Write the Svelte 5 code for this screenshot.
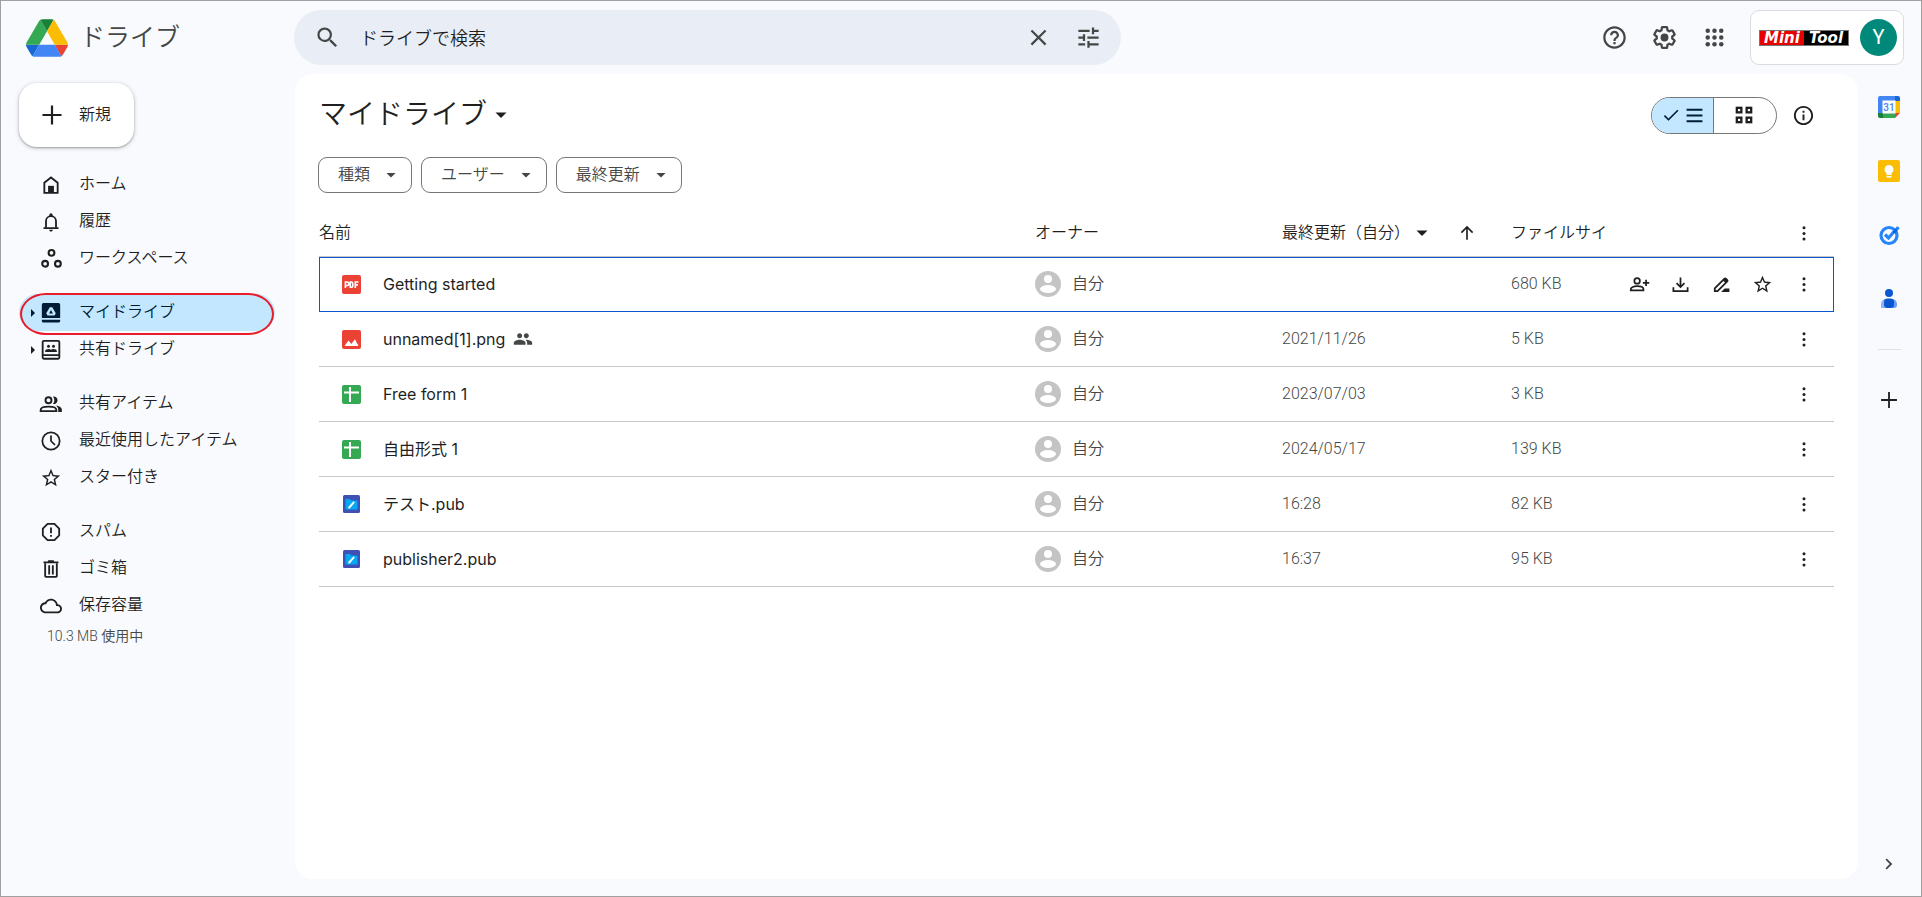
<script lang="ts">
  interface NavItem {
    icon: string;
    label: string;
    size?: number;
    active?: boolean;
    expandable?: boolean;
  }

  interface DriveFile {
    name: string;
    type: "pdf" | "image" | "sheet" | "pub";
    modified: string;
    size: string;
    shared?: boolean;
  }

  const navGroups: NavItem[][] = [
    [
      { icon: "home", label: "ホーム" },
      { icon: "bell", label: "履歴" },
      { icon: "workspaces", label: "ワークスペース", size: 21 },
    ],
    [
      { icon: "drive", label: "マイドライブ", active: true, expandable: true },
      { icon: "sharedDrive", label: "共有ドライブ", expandable: true },
    ],
    [
      { icon: "people", label: "共有アイテム" },
      { icon: "clock", label: "最近使用したアイテム" },
      { icon: "star", label: "スター付き", size: 22 },
    ],
    [
      { icon: "spam", label: "スパム" },
      { icon: "trash", label: "ゴミ箱" },
      { icon: "cloud", label: "保存容量", size: 22 },
    ],
  ];

  const files: DriveFile[] = [
    { name: "Getting started", type: "pdf", modified: "", size: "680 KB" },
    { name: "unnamed[1].png", type: "image", modified: "2021/11/26", size: "5 KB", shared: true },
    { name: "Free form 1", type: "sheet", modified: "2023/07/03", size: "3 KB" },
    { name: "自由形式 1", type: "sheet", modified: "2024/05/17", size: "139 KB" },
    { name: "テスト.pub", type: "pub", modified: "16:28", size: "82 KB" },
    { name: "publisher2.pub", type: "pub", modified: "16:37", size: "95 KB" },
  ];

  const chips = ["種類", "ユーザー", "最終更新"];

  const rowActions = [
    { icon: "personAdd", label: "共有" },
    { icon: "download", label: "ダウンロード" },
    { icon: "rename", label: "名前を変更" },
    { icon: "star", label: "スターを付ける" },
  ];

  let query = $state("");
  let selected = $state(0);
  let view = $state<"list" | "grid">("list");
</script>

{#snippet icon(name: string, size = 23)}
  <svg class="icon" width={size} height={size} viewBox="0 0 24 24" fill="currentColor" aria-hidden="true">
    {#if name === "search"}
      <path d="M15.5 14h-.79l-.28-.27A6.471 6.471 0 0 0 16 9.5 6.5 6.5 0 1 0 9.5 16c1.61 0 3.09-.59 4.23-1.57l.27.28v.79l5 4.99L20.49 19l-4.99-5zm-6 0C7.01 14 5 11.99 5 9.5S7.01 5 9.5 5 14 7.01 14 9.5 11.99 14 9.5 14z" />
    {:else if name === "close"}
      <path d="M19 6.41L17.59 5 12 10.59 6.41 5 5 6.41 10.59 12 5 17.59 6.41 19 12 13.41 17.59 19 19 17.59 13.41 12z" />
    {:else if name === "tune"}
      <path d="M3 17v2h6v-2H3zM3 5v2h10V5H3zm10 16v-2h8v-2h-8v-2h-2v6h2zM7 9v2H3v2h4v2h2V9H7zm14 4v-2H11v2h10zm-6-4h2V7h4V5h-4V3h-2v6z" />
    {:else if name === "help"}
      <path d="M11 18h2v-2h-2v2zm1-16C6.48 2 2 6.48 2 12s4.48 10 10 10 10-4.48 10-10S17.52 2 12 2zm0 18c-4.41 0-8-3.59-8-8s3.59-8 8-8 8 3.59 8 8-3.59 8-8 8zm0-14c-2.21 0-4 1.79-4 4h2c0-1.1.9-2 2-2s2 .9 2 2c0 2-3 1.75-3 5h2c0-2.25 3-2.5 3-5 0-2.21-1.79-4-4-4z" />
    {:else if name === "settings"}
      <path d="M13.85 22.25h-3.7c-.74 0-1.36-.54-1.45-1.27l-.27-1.89c-.27-.14-.53-.29-.79-.46l-1.8.72c-.7.26-1.47-.03-1.81-.65L2.2 15.53c-.35-.66-.2-1.44.36-1.88l1.53-1.19c-.01-.15-.02-.3-.02-.46 0-.15.01-.31.02-.46l-1.52-1.19c-.59-.45-.74-1.26-.37-1.88l1.85-3.19c.34-.62 1.11-.9 1.79-.63l1.81.73c.26-.17.52-.32.78-.46l.27-1.91c.09-.7.71-1.25 1.44-1.25h3.7c.74 0 1.36.54 1.45 1.27l.27 1.89c.27.14.53.29.79.46l1.8-.72c.71-.26 1.48.03 1.82.65l1.84 3.18c.36.66.2 1.44-.36 1.88l-1.52 1.19c.01.15.02.3.02.46s-.01.31-.02.46l1.52 1.19c.56.45.72 1.23.37 1.86l-1.86 3.22c-.34.62-1.11.9-1.8.63l-1.8-.72c-.26.17-.52.32-.78.46l-.27 1.91c-.1.68-.72 1.22-1.46 1.22zm-3.23-2h2.76l.37-2.55.53-.22c.44-.18.88-.44 1.34-.78l.45-.34 2.38.96 1.38-2.4-2.03-1.58.07-.56c.03-.26.06-.51.06-.78s-.03-.53-.06-.78l-.07-.56 2.03-1.58-1.39-2.4-2.39.96-.45-.35c-.42-.32-.87-.58-1.33-.77l-.52-.22-.37-2.55h-2.76l-.37 2.55-.53.21c-.44.19-.88.44-1.34.79l-.45.33-2.38-.95-1.39 2.39 2.03 1.58-.07.56a7 7 0 0 0-.06.79c0 .26.02.53.06.78l.07.56-2.03 1.58 1.38 2.4 2.39-.96.45.35c.43.33.86.58 1.33.77l.53.22.38 2.55z" />
      <circle cx="12" cy="12" r="3.5" />
    {:else if name === "apps"}
      {#each [6, 12, 18] as y}
        {#each [6, 12, 18] as x}
          <circle cx={x} cy={y} r="2" />
        {/each}
      {/each}
    {:else if name === "plus"}
      <path d="M13.1 2.5v8.4h8.4v2.2h-8.4v8.4h-2.2v-8.4H2.5v-2.2h8.4V2.5z" />
    {:else if name === "home"}
      <path d="M4 21.5V9.2L12 3l8 6.2V21.5Z" fill="none" stroke="currentColor" stroke-width="2.2" />
      <rect x="8.5" y="13" width="7" height="8.5" />
    {:else if name === "bell"}
      <path d="M6 19v-8a6 6 0 0 1 12 0v8" fill="none" stroke="currentColor" stroke-width="2.2" />
      <path d="M3 18.2h18v2.2H3zM10 3.5a2 2 0 0 1 4 0v2h-4zM9.8 21.4h4.4a2.2 2.2 0 0 1-4.4 0z" />
    {:else if name === "workspaces"}
      <g fill="none" stroke="currentColor" stroke-width="2.4">
        <circle cx="12" cy="5.5" r="3.3" />
        <circle cx="4.7" cy="18" r="3.3" />
        <circle cx="19.3" cy="18" r="3.3" />
      </g>
    {:else if name === "drive"}
      <path fill-rule="evenodd" d="M3 0h18a2 2 0 0 1 2 2v16H1V2a2 2 0 0 1 2-2zm7.5 5L6.3 12.2 7.8 15h8.4l1.5-2.8L13.5 5zm1.5 3.5 2.3 4h-4.6z" />
      <path d="M1 20h22v1.5a2 2 0 0 1-2 2H3a2 2 0 0 1-2-2z" />
    {:else if name === "sharedDrive"}
      <path d="M2 2.5a1.5 1.5 0 0 1 1.5-1.5h17A1.5 1.5 0 0 1 22 2.5v18.5a1.5 1.5 0 0 1-1.5 1.5h-17A1.5 1.5 0 0 1 2 21zM2 18.2h20" fill="none" stroke="currentColor" stroke-width="2.2" />
      <circle cx="9" cy="7.5" r="1.8" />
      <circle cx="15" cy="7.5" r="1.8" />
      <path d="M5 14.5v-1.2c0-1.5 2-2.5 4-2.5 1.2 0 2.3.3 3 .9.7-.6 1.8-.9 3-.9 2 0 4 1 4 2.5v1.2z" />
    {:else if name === "people"}
      <g fill="none" stroke="currentColor" stroke-width="2.3">
        <circle cx="9" cy="7.5" r="3.6" />
        <path d="M-.4 20.5v-1.4c0-2.6 4.5-4 9.4-4s9.4 1.4 9.4 4v1.4z" />
      </g>
      <path d="M14.3 12a6.7 6.7 0 0 0 0-9 4.6 4.6 0 1 1 0 9zM18 13.8c3.5.5 7 2.2 7 4.8v3h-4.3v-2.8c0-1.9-1-3.7-2.7-5z" />
    {:else if name === "peopleFill"}
      <path d="M16 11c1.66 0 2.99-1.34 2.99-3S17.66 5 16 5s-3 1.34-3 3 1.34 3 3 3zm-8 0c1.66 0 2.99-1.34 2.99-3S9.66 5 8 5 5 6.34 5 8s1.34 3 3 3zm0 2c-2.33 0-7 1.17-7 3.5V19h14v-2.5c0-2.33-4.67-3.5-7-3.5zm8 0c-.29 0-.62.02-.97.05 1.16.84 1.97 1.97 1.97 3.45V19h6v-2.5c0-2.33-4.67-3.5-7-3.5z" />
    {:else if name === "clock"}
      <g fill="none" stroke="currentColor" stroke-width="2.1">
        <circle cx="12" cy="12" r="10.4" />
        <path d="M12 5.5V12l4.8 4.8" />
      </g>
    {:else if name === "star"}
      <path d="M22 9.24l-7.19-.62L12 2 9.19 8.63 2 9.24l5.46 4.73L5.82 21 12 17.27 18.18 21l-1.63-7.03L22 9.24zM12 15.4l-3.76 2.27 1-4.28-3.32-2.88 4.38-.38L12 6.1l1.71 4.04 4.38.38-3.32 2.88 1 4.28L12 15.4z" />
    {:else if name === "spam"}
      <path d="M7.9 2.2h8.2l5.7 5.7v8.2l-5.7 5.7H7.9l-5.7-5.7V7.9z" fill="none" stroke="currentColor" stroke-width="2.2" stroke-linejoin="round" />
      <path d="M10.9 6.5h2.2v7h-2.2zM10.9 15.5h2.2v2.2h-2.2z" />
    {:else if name === "trash"}
      <path d="M5 5v15.5a1 1 0 0 0 1 1h12a1 1 0 0 0 1-1V5" fill="none" stroke="currentColor" stroke-width="2.2" />
      <path d="M8.5 1.5h7V3H21v2.2H3V3h5.5zM8.7 7.5h2.2v11H8.7zM13.1 7.5h2.2v11h-2.2z" />
    {:else if name === "cloud"}
      <path d="M19.35 10.04C18.67 6.59 15.64 4 12 4 9.11 4 6.6 5.64 5.35 8.04 2.34 8.36 0 10.91 0 14c0 3.31 2.69 6 6 6h13c2.76 0 5-2.24 5-5 0-2.64-2.05-4.78-4.65-4.96zM19 18H6c-2.21 0-4-1.79-4-4s1.79-4 4-4h.71C7.37 7.69 9.48 6 12 6c3.04 0 5.5 2.46 5.5 5.5v.5H19c1.66 0 3 1.34 3 3s-1.34 3-3 3z" />
    {:else if name === "caret"}
      <path d="M6.5 9.5l5.5 5.5 5.5-5.5z" />
    {:else if name === "check"}
      <path d="M9 16.2L4.8 12l-1.4 1.4L9 19 21 7l-1.4-1.4z" />
    {:else if name === "list"}
      <path d="M2 3.5h20V6H2zM2 10.8h20v2.5H2zM2 18h20v2.5H2z" />
    {:else if name === "grid"}
      <g fill="none" stroke="currentColor" stroke-width="2.8">
        <rect x="3.4" y="3.4" width="5.4" height="5.4" />
        <rect x="15.2" y="3.4" width="5.4" height="5.4" />
        <rect x="3.4" y="15.2" width="5.4" height="5.4" />
        <rect x="15.2" y="15.2" width="5.4" height="5.4" />
      </g>
    {:else if name === "info"}
      <path d="M11 7h2v2.2h-2zm0 4h2v6h-2zm1-9C6.48 2 2 6.48 2 12s4.48 10 10 10 10-4.48 10-10S17.52 2 12 2zm0 18c-4.41 0-8-3.59-8-8s3.59-8 8-8 8 3.59 8 8-3.59 8-8 8z" />
    {:else if name === "arrowUp"}
      <path d="M12 21V4M4.5 11.5L12 4l7.5 7.5" fill="none" stroke="currentColor" stroke-width="2.2" />
    {:else if name === "kebab"}
      <circle cx="12" cy="5" r="2" />
      <circle cx="12" cy="12.5" r="2" />
      <circle cx="12" cy="20" r="2" />
    {:else if name === "personAdd"}
      <g fill="none" stroke="currentColor" stroke-width="2.2">
        <circle cx="9" cy="7.5" r="3.5" />
        <path d="M1 19.5V18c0-2.4 3.8-3.8 8-3.8s8 1.4 8 3.8v1.5zM20.3 6v8M16.3 10h8" />
      </g>
    {:else if name === "download"}
      <path d="M12 3v12M7 10.2l5 5 5-5M3 15.5v5h18v-5" fill="none" stroke="currentColor" stroke-width="2.2" />
    {:else if name === "rename"}
      <path d="M3.5 20.5V17L15.8 4.7a1.2 1.2 0 0 1 1.7 0l1.8 1.8a1.2 1.2 0 0 1 0 1.7L7 20.5z" fill="none" stroke="currentColor" stroke-width="2.2" />
      <path d="M13.5 6.5l4 4 2.5-2.7-3.5-4zM16 17h6v4.5H11.5z" />
    {:else if name === "chevron"}
      <path d="M9.6 6L8.2 7.4l4.6 4.6-4.6 4.6L9.6 18l6-6z" />
    {/if}
  </svg>
{/snippet}

{#snippet fileIcon(type: DriveFile["type"])}
  <svg class="icon" width="19" height="19" viewBox="0 0 19 19" aria-hidden="true">
    {#if type === "pdf"}
      <rect width="19" height="19" rx="2" fill="#ea4335" />
      <g fill="none" stroke="#fff" stroke-width="1.6">
        <path d="M3.4 13V7h1.7a1.6 1.6 0 0 1 0 3.5H3.4M8.3 7v5.3h1a1.5 1.5 0 0 0 1.5-1.5V8.5A1.5 1.5 0 0 0 9.3 7zM13.3 13V7h3.2M13.3 9.9h2.7" />
      </g>
    {:else if type === "image"}
      <rect width="19" height="19" rx="2" fill="#ea4335" />
      <path d="M2.5 16l4-5.5 2.8 3.6 3.7-4.8 3.5 6.7z" fill="#fff" />
    {:else if type === "sheet"}
      <rect width="19" height="19" rx="2" fill="#34a853" />
      <path d="M2 6.5h5V2h2v4.5h8v2H9V17H7V8.5H2z" fill="#fff" />
    {:else}
      <rect x="1" width="17" height="18" rx="1.5" fill="#3f51b5" />
      <path d="M3.5 4h4.3l1.5 1.5h6.2v9h-12z" fill="#03a9f4" />
      <path d="M11.5 6.3l1.3 1.2-5 6H6.3v-1.4z" fill="#fff" />
    {/if}
  </svg>
{/snippet}

<div class="app">
  <header class="topbar">
    <a class="brand" href="#home">
      <svg width="42" height="38" viewBox="0 0 87.3 78" aria-hidden="true">
        <path fill="#1967d2" d="m6.6 66.85 3.85 6.65c.8 1.4 1.95 2.5 3.3 3.3l13.75-23.8h-27.5c0 1.55.4 3.1 1.2 4.5z" />
        <path fill="#34a853" d="m43.65 25-13.75-23.8c-1.35.8-2.5 1.9-3.3 3.3l-25.4 44a9.06 9.06 0 0 0 -1.2 4.5h27.5z" />
        <path fill="#ea4335" d="m73.55 76.8c1.35-.8 2.5-1.9 3.3-3.3l1.6-2.75 7.65-13.25c.8-1.4 1.2-2.95 1.2-4.5h-27.5l5.85 11.5z" />
        <path fill="#188038" d="m43.65 25 13.75-23.8c-1.35-.8-2.9-1.2-4.5-1.2h-18.5c-1.6 0-3.15.45-4.5 1.2z" />
        <path fill="#4285f4" d="m59.8 53h-32.3l-13.75 23.8c1.35.8 2.9 1.2 4.5 1.2h50.8c1.6 0 3.15-.45 4.5-1.2z" />
        <path fill="#fbbc04" d="m73.4 26.5-12.7-22c-.8-1.4-1.95-2.5-3.3-3.3l-13.75 23.8 16.15 28h27.45c0-1.55-.4-3.1-1.2-4.5z" />
      </svg>
      <span>ドライブ</span>
    </a>

    <form class="search" role="search" onsubmit={(e) => e.preventDefault()}>
      <button type="submit" aria-label="検索">{@render icon("search", 27)}</button>
      <input type="text" aria-label="ドライブで検索" placeholder="ドライブで検索" bind:value={query} />
      <button type="button" aria-label="検索をクリア" onclick={() => (query = "")}>{@render icon("close", 27)}</button>
      <button type="button" aria-label="検索オプション">{@render icon("tune", 27)}</button>
    </form>

    <div class="top-actions">
      <button aria-label="ヘルプ">{@render icon("help", 27)}</button>
      <button aria-label="設定">{@render icon("settings", 27)}</button>
      <button aria-label="アプリ">{@render icon("apps", 27)}</button>
      <button class="account" aria-label="アカウント">
        <span class="org"><span class="org-red">Mini</span><span class="org-black">Tool</span></span>
        <span class="avatar">Y</span>
      </button>
    </div>
  </header>

  <aside class="sidebar">
    <button class="new-btn">{@render icon("plus", 24)}<span>新規</span></button>
    <nav>
      {#each navGroups as group}
        <ul>
          {#each group as item}
            <li>
              <a href="#{item.icon}" class:active={item.active} aria-current={item.active ? "page" : undefined}>
                <span class="expander">
                  {#if item.expandable}
                    <svg width="4" height="8" viewBox="0 0 4 8" aria-hidden="true"><path d="M0 0l4 4-4 4z" fill="currentColor" /></svg>
                  {/if}
                </span>
                <span class="nav-icon">{@render icon(item.icon, item.size ?? 20)}</span>
                <span class="nav-label">{item.label}</span>
              </a>
            </li>
          {/each}
        </ul>
      {/each}
    </nav>
    <p class="storage">10.3 MB 使用中</p>
  </aside>

  <main class="panel">
    <div class="title-row">
      <h1><button>マイドライブ{@render icon("caret", 24)}</button></h1>
      <div class="view-toggle">
        <button class:on={view === "list"} aria-label="リスト" aria-pressed={view === "list"} onclick={() => (view = "list")}>
          {#if view === "list"}{@render icon("check", 20)}{/if}
          {@render icon("list", 19)}
        </button>
        <button class:on={view === "grid"} aria-label="グリッド" aria-pressed={view === "grid"} onclick={() => (view = "grid")}>
          {@render icon("grid", 20)}
        </button>
      </div>
      <button class="info" aria-label="詳細を表示">{@render icon("info")}</button>
    </div>

    <div class="chips">
      {#each chips as chip}
        <button>{chip}{@render icon("caret", 20)}</button>
      {/each}
    </div>

    <table>
      <colgroup>
        <col />
        <col class="col-owner" />
        <col class="col-date" />
        <col class="col-size" />
        <col class="col-actions" />
      </colgroup>
      <thead>
        <tr>
          <th>名前</th>
          <th>オーナー</th>
          <th>
            <div class="sort">
              <button>最終更新（自分）{@render icon("caret", 24)}</button>
              <button aria-label="並べ替えの方向を逆にする">{@render icon("arrowUp", 18)}</button>
            </div>
          </th>
          <th>ファイルサイ</th>
          <th>
            <div class="actions"><button aria-label="その他">{@render icon("kebab", 18)}</button></div>
          </th>
        </tr>
      </thead>
      <tbody>
        {#each files as file, i}
          <tr class:selected={selected === i} onclick={() => (selected = i)}>
            <td>
              <div class="name">
                {@render fileIcon(file.type)}
                <span>{file.name}</span>
                {#if file.shared}{@render icon("peopleFill", 20)}{/if}
              </div>
            </td>
            <td>
              <div class="owner">
                <svg class="icon" width="26" height="26" viewBox="0 0 26 26" aria-hidden="true">
                  <circle cx="13" cy="13" r="13" fill="#c4c4c4" />
                  <circle cx="13" cy="8" r="4" fill="#fff" />
                  <ellipse cx="13" cy="18" rx="8" ry="4" fill="#fff" />
                </svg>
                <span>自分</span>
              </div>
            </td>
            <td>{file.modified}</td>
            <td>{file.size}</td>
            <td>
              <div class="actions">
                {#if selected === i}
                  {#each rowActions as action}
                    <button aria-label={action.label}>{@render icon(action.icon, action.icon === "star" ? 21 : 19)}</button>
                  {/each}
                {/if}
                <button aria-label="その他の操作">{@render icon("kebab", 18)}</button>
              </div>
            </td>
          </tr>
        {/each}
      </tbody>
    </table>
  </main>

  <aside class="rail">
    <button aria-label="カレンダー">
      <svg width="22" height="22" viewBox="0 0 22 22" aria-hidden="true">
        <path d="M2 0h15v5H5v12H0V2a2 2 0 0 1 2-2z" fill="#4285f4" />
        <path d="M17 0h3a2 2 0 0 1 2 2v3h-5z" fill="#1967d2" />
        <path d="M17 5h5v12h-5z" fill="#fbbc04" />
        <path d="M0 17h5v5H2a2 2 0 0 1-2-2z" fill="#188038" />
        <path d="M5 17h12v5H5z" fill="#34a853" />
        <path d="M17 17h5l-5 5z" fill="#ea4335" />
        <path d="M4.5 4.5h13v13h-13z" fill="#fff" />
        <text class="cal-day" x="11" y="15" text-anchor="middle">31</text>
      </svg>
    </button>
    <button aria-label="Keep">
      <svg width="22" height="22" viewBox="0 0 22 22" aria-hidden="true">
        <rect width="22" height="22" rx="2" fill="#fbbc04" />
        <path d="M11 5a4.5 4.5 0 0 0-2.5 8.2V15h5v-1.8A4.5 4.5 0 0 0 11 5zM8.5 16h5v1.6h-5z" fill="#fff" />
      </svg>
    </button>
    <button aria-label="ToDo リスト">
      <svg width="22" height="22" viewBox="0 0 22 22" aria-hidden="true">
        <circle cx="11" cy="11.5" r="8" fill="none" stroke="#2684fc" stroke-width="3.2" />
        <path d="M7 10.5l3.5 3.5 7-8" fill="none" stroke="#2684fc" stroke-width="3.2" />
        <path d="M14.5 8l3.5-4 2 2-3.2 3.6z" fill="#0066da" />
        <circle cx="19.5" cy="4.2" r="1.8" fill="#2684fc" />
      </svg>
    </button>
    <button aria-label="連絡先">
      <svg width="22" height="22" viewBox="0 0 22 22" aria-hidden="true">
        <circle cx="11" cy="5" r="4" fill="#0b57d0" />
        <path d="M3 20v-4a5 5 0 0 1 5-5h6v9z" fill="#8ab4f8" />
        <path d="M8 11h6a5 5 0 0 1 5 5v1a3 3 0 0 1-3 3H8z" fill="#6a9cff" />
        <rect x="6" y="10.5" width="10" height="9.5" rx="3.5" fill="#0b57d0" />
      </svg>
    </button>
    <hr />
    <button aria-label="アドオンを取得">{@render icon("plus", 20)}</button>
    <button class="collapse" aria-label="サイドパネルを非表示">{@render icon("chevron", 22)}</button>
  </aside>
</div>

<style>
  :global(body) {
    background: #f8fafd;
  }

  .app,
  .app * {
    box-sizing: border-box;
  }

  .app {
    display: grid;
    grid-template-columns: 294px minmax(0, 1fr) 63px;
    grid-template-rows: 73px 1fr;
    min-height: 100vh;
    background: #f8fafd;
    border: 1px solid #a0a0a0;
    color: #1f1f1f;
    font-family: Roboto, "Noto Sans CJK JP", sans-serif;
    font-size: 16px;
    font-weight: 350;
    line-height: 24px;
  }

  button {
    display: flex;
    align-items: center;
    justify-content: center;
    padding: 0;
    border: none;
    background: none;
    color: inherit;
    font: inherit;
    cursor: pointer;
  }

  a {
    color: inherit;
    text-decoration: none;
  }

  .icon {
    flex-shrink: 0;
    overflow: visible;
  }

  /* Top bar */
  .topbar {
    grid-column: 1 / -1;
    display: flex;
    align-items: center;
    padding-right: 17px;
  }

  .brand {
    display: flex;
    align-items: center;
    gap: 12px;
    flex: 0 0 293px;
    padding-left: 25px;
    color: #444746;
    font-size: 25px;
    line-height: 38px;
  }

  .search {
    display: flex;
    align-items: center;
    flex: 0 1 827px;
    height: 55px;
    padding: 0 10px;
    border-radius: 28px;
    background: #e9eef6;
    color: #444746;
  }
  .search button {
    width: 46px;
    height: 46px;
  }
  .search button + button {
    margin-left: 4px;
  }
  .search input {
    flex: 1;
    min-width: 0;
    padding: 2px 10px 0;
    border: none;
    outline: none;
    background: none;
    color: #1f1f1f;
    font: inherit;
    font-size: 18px;
  }
  .search input::placeholder {
    color: #1f1f1f;
    opacity: 1;
  }

  .top-actions {
    display: flex;
    align-items: center;
    gap: 4px;
    margin-left: auto;
    color: #444746;
  }
  .top-actions button {
    width: 46px;
    height: 46px;
  }
  .top-actions .account {
    gap: 11px;
    width: auto;
    height: 55px;
    margin-left: 9px;
    padding: 0 6px 0 8px;
    border: 1px solid #dadce0;
    border-radius: 9px;
    background: #fff;
  }

  .org {
    display: flex;
    border: 1px solid #777;
    color: #fff;
    font-family: "DejaVu Sans", sans-serif;
    font-size: 15px;
    font-style: italic;
    font-weight: 700;
    line-height: 14px;
  }
  .org span {
    width: 44px;
    text-align: center;
  }
  .org-red {
    background: #e60000;
  }
  .org-black {
    background: #000;
  }

  .avatar {
    width: 37px;
    height: 37px;
    border-radius: 50%;
    background: #00897b;
    color: #fff;
    font-size: 20px;
    font-weight: 400;
    line-height: 37px;
    text-align: center;
  }

  /* Sidebar */
  .sidebar {
    padding: 9px 20px 0 18px;
  }

  .new-btn {
    gap: 15px;
    width: 115px;
    height: 64px;
    padding-right: 2px;
    border-radius: 18px;
    background: #fff;
    box-shadow:
      0 1px 2px rgba(60, 64, 67, 0.4),
      0 1px 4px 1px rgba(60, 64, 67, 0.15);
  }

  nav {
    margin-top: 19px;
  }
  nav ul {
    margin: 0 0 17px;
    padding: 0;
    list-style: none;
  }
  nav a {
    position: relative;
    display: flex;
    align-items: center;
    height: 37px;
    padding-left: 12px;
    border-radius: 19px;
  }
  nav a.active {
    background: #c2e7ff;
    color: #001d35;
  }
  nav a.active::after {
    content: "";
    position: absolute;
    inset: -1px 1px -4px;
    border: 2px solid #e81c2a;
    border-radius: 26px / 21px;
  }
  .expander {
    display: flex;
    width: 9px;
  }
  .nav-icon {
    display: flex;
    align-items: center;
    justify-content: center;
    width: 22px;
    margin-right: 17px;
  }
  .nav-label {
    padding-bottom: 2px;
  }

  .storage {
    margin: -15px 0 0 28px;
    color: #444746;
    font-size: 14px;
    line-height: 20px;
  }

  /* File panel */
  .panel {
    margin-bottom: 17px;
    padding: 18px 24px;
    border-radius: 18px;
    background: #fff;
  }

  .title-row {
    display: flex;
    align-items: center;
    height: 46px;
  }
  h1 {
    margin: 0 auto 0 0;
    font-size: 28px;
    font-weight: 350;
    line-height: 40px;
  }
  h1 button {
    gap: 2px;
  }

  .view-toggle {
    display: grid;
    grid-template-columns: 61px 1fr;
    width: 126px;
    height: 37px;
    overflow: hidden;
    border: 1px solid #747775;
    border-radius: 19px;
  }
  .view-toggle button {
    gap: 4px;
  }
  .view-toggle button + button {
    border-left: 1px solid #747775;
  }
  .view-toggle button + button .icon {
    margin-right: 3px;
  }
  .view-toggle .on {
    background: #c2e7ff;
    color: #001d35;
  }

  .info {
    width: 37px;
    height: 37px;
    margin: 0 12px 0 8px;
  }

  .chips {
    display: flex;
    gap: 9px;
    margin: 19px 0 0 -1px;
  }
  .chips button {
    gap: 11px;
    height: 36px;
    padding: 0 10px 0 19px;
    border: 1px solid #747775;
    border-radius: 9px;
    color: #444746;
  }

  table {
    width: 100%;
    margin-top: 17px;
    border-collapse: separate;
    border-spacing: 0;
    table-layout: fixed;
  }
  .col-owner {
    width: 247px;
  }
  .col-date {
    width: 229px;
  }
  .col-size {
    width: 103px;
  }
  .col-actions {
    width: 220px;
  }
  th,
  td {
    height: 55px;
    padding: 0;
    border-bottom: 1px solid #c7c7c7;
    text-align: left;
    white-space: nowrap;
  }
  th {
    height: 47px;
    font-weight: 350;
  }
  td {
    color: #444746;
  }
  tr.selected {
    outline: 1px solid #0b57d0;
    outline-offset: -1px;
  }

  .sort {
    display: flex;
    align-items: center;
    gap: 24px;
  }
  .name {
    display: flex;
    align-items: center;
    padding-left: 23px;
    color: #1f1f1f;
    font-family: Inter, "Noto Sans CJK JP", sans-serif;
    font-weight: 400;
  }
  .name span {
    margin: 0 8px 0 22px;
  }
  .name .icon:last-child {
    color: #444746;
  }
  .owner {
    display: flex;
    align-items: center;
    gap: 11px;
  }
  .actions {
    display: flex;
    justify-content: flex-end;
    padding-right: 12px;
    color: #1f1f1f;
  }
  .actions button {
    width: 37px;
    height: 37px;
    margin-left: 4px;
  }

  /* Right rail */
  .rail {
    display: flex;
    flex-direction: column;
    align-items: center;
    padding: 10px 1px 0 0;
  }
  .rail button {
    width: 46px;
    height: 46px;
    margin-bottom: 18px;
  }
  .rail hr {
    width: 23px;
    margin: 9px 0 27px;
    border: none;
    border-top: 1px solid #dfe1e5;
  }
  .rail .collapse {
    margin: auto 0 9px;
    color: #444746;
  }
  .cal-day {
    fill: #4285f4;
    font-family: Roboto, sans-serif;
    font-size: 10px;
    font-weight: 500;
  }
</style>
